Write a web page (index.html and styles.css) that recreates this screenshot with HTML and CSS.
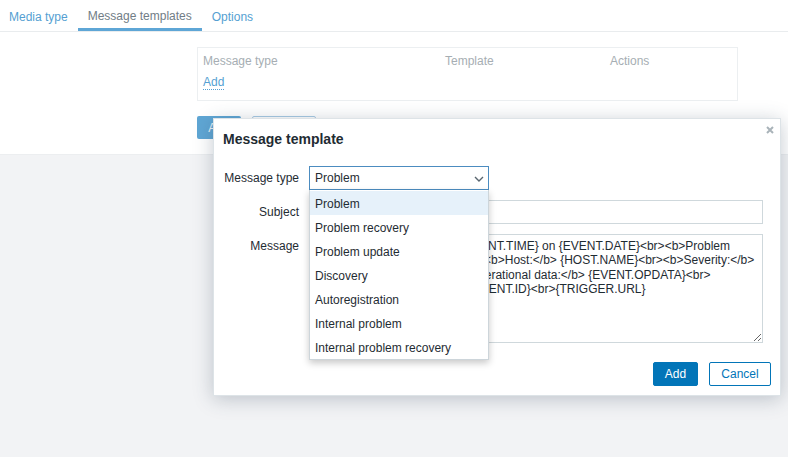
FILE: index.html
```html
<!DOCTYPE html>
<html>
<head>
<meta charset="utf-8">
<link rel="stylesheet" href="styles.css">
</head>
<body>
<div class="top">
  <nav class="tabs">
    <span class="tab first">Media type</span>
    <span class="tab active">Message templates</span>
    <span class="tab">Options</span>
  </nav>
  <div class="content">
    <div class="tbl">
      <div class="tbl-head">
        <span class="c1">Message type</span>
        <span class="c2">Template</span>
        <span class="c3">Actions</span>
      </div>
      <div class="tbl-row"><span class="link">Add</span></div>
    </div>
    <div class="bg-buttons">
      <span class="bg-btn primary">Add</span>
      <span class="bg-btn outline">Cancel</span>
    </div>
  </div>
</div>

<div class="dialog">
  <span class="close"><svg width="8" height="8" viewBox="0 0 8 8"><path d="M1 1L7 7M7 1L1 7" stroke="#a9b3b9" stroke-width="2"/></svg></span>
  <h4 class="title">Message template</h4>
  <div class="form">
    <label class="lbl">Message type</label>
    <div class="field">
      <div class="select">
        <span>Problem</span>
        <svg class="chev" width="10" height="6" viewBox="0 0 10 6"><path d="M1 1L5 5L9 1" fill="none" stroke="#5a6670" stroke-width="1.4"/></svg>
        <ul class="list">
          <li class="hl">Problem</li>
          <li>Problem recovery</li>
          <li>Problem update</li>
          <li>Discovery</li>
          <li>Autoregistration</li>
          <li>Internal problem</li>
          <li>Internal problem recovery</li>
        </ul>
      </div>
    </div>
    <label class="lbl">Subject</label>
    <div class="field"><input class="input" type="text" value="Problem: {EVENT.NAME}"></div>
    <label class="lbl">Message</label>
    <div class="field"><textarea class="area" readonly><b>Problem started</b> at {EVENT.TIME} on {EVENT.DATE}<br><b>Problem name:</b> {EVENT.NAME}<br><b>Host:</b> {HOST.NAME}<br><b>Severity:</b> {EVENT.SEVERITY}<br><b>Operational data:</b> {EVENT.OPDATA}<br> <b>Original problem ID:</b> {EVENT.ID}<br>{TRIGGER.URL}</textarea></div>
  </div>
  <div class="footer">
    <button class="btn primary">Add</button>
    <button class="btn outline">Cancel</button>
  </div>
</div>
</body>
</html>
```
FILE: styles.css
```css
html, body {
  margin: 0;
  padding: 0;
}
body {
  width: 788px;
  height: 457px;
  background: #f2f3f5;
  font-family: "Liberation Sans", Arial, sans-serif;
  font-size: 12px;
  color: #1f2c33;
  position: relative;
  overflow: hidden;
}
.top {
  background: #fff;
  height: 154px;
  border-bottom: 1px solid #eceef0;
}
.tabs {
  display: flex;
  height: 31px;
  border-bottom: 1px solid #e9ecee;
}
.tab {
  display: flex;
  align-items: center;
  padding: 2px 10px 0;
  color: #559fd2;
  box-sizing: border-box;
  height: 31px;
}
.tab.first {
  padding-left: 9px;
}
.tab.active {
  color: #717d86;
  border-bottom: 3px solid #5ea6d6;
  padding-top: 3px;
}
.content {
  padding: 15px 0 0 197px;
}
.tbl {
  width: 541px;
  height: 54px;
  box-sizing: border-box;
  border: 1px solid #eceff1;
  padding: 6px 5px 0;
}
.tbl-head {
  display: flex;
  color: #a6aeb3;
  line-height: 14px;
}
.c1 { width: 242px; }
.c2 { width: 165px; }
.tbl-row {
  margin-top: 7px;
  line-height: 14px;
}
.link {
  color: #559fd2;
  border-bottom: 1px dotted #559fd2;
}
.bg-buttons {
  display: flex;
  gap: 11px;
  margin-top: 15px;
}
.bg-btn {
  height: 23px;
  box-sizing: border-box;
  border-radius: 2px;
  display: flex;
  align-items: center;
  justify-content: center;
}
.bg-btn.primary {
  width: 44px;
  background: #5fa6d4;
  color: #eaf3fa;
}
.bg-btn.outline {
  width: 64px;
  border: 1px solid #a9cbe4;
  color: #a9cbe4;
}

.dialog {
  position: absolute;
  left: 213px;
  top: 118px;
  width: 568px;
  height: 278px;
  box-sizing: border-box;
  background: #fff;
  border: 1px solid #dde3e7;
  box-shadow: 0 3px 18px rgba(50, 70, 90, 0.28);
  padding: 0 0 0 9px;
}
.close {
  position: absolute;
  top: 7px;
  right: 6px;
  display: block;
  line-height: 0;
}
.title {
  margin: 0;
  padding-top: 11px;
  font-size: 14px;
  font-weight: bold;
  line-height: 18px;
  color: #1f2c33;
}
.form {
  margin-top: 18px;
  display: grid;
  grid-template-columns: 76px 454px;
  grid-auto-rows: min-content;
  column-gap: 10px;
  row-gap: 10px;
}
.lbl {
  text-align: right;
  line-height: 23px;
  padding-top: 1px;
  color: #1f2c33;
}
.field {
  position: relative;
}
.select {
  position: relative;
  width: 180px;
  height: 24px;
  box-sizing: border-box;
  border: 1px solid #4c8cc0;
  padding-left: 5px;
  line-height: 22px;
  background: #fff;
}
.chev {
  position: absolute;
  right: 4px;
  top: 9px;
}
.list {
  position: absolute;
  left: -1px;
  top: 23px;
  width: 180px;
  margin: 0;
  padding: 1px 0 0;
  list-style: none;
  background: #fff;
  border: 1px solid #cdd5da;
  border-top: none;
  box-shadow: 0 3px 7px rgba(0, 0, 0, 0.22);
  z-index: 5;
  box-sizing: border-box;
}
.list li {
  height: 24px;
  line-height: 26px;
  padding-left: 5px;
  color: #1f2c33;
}
.list li.hl {
  background: #e6f1fa;
}
.input {
  display: block;
  width: 454px;
  height: 24px;
  box-sizing: border-box;
  border: 1px solid #cfd8dc;
  padding: 0 5px;
  font-family: "Liberation Sans", Arial, sans-serif;
  font-size: 12px;
  color: #1f2c33;
  outline: none;
  margin: 0;
}
.area {
  display: block;
  width: 454px;
  height: 109px;
  box-sizing: border-box;
  border: 1px solid #cfd8dc;
  padding: 4px 4px;
  font-family: "Liberation Sans", Arial, sans-serif;
  font-size: 12px;
  line-height: 14.4px;
  color: #1f2c33;
  resize: both;
  outline: none;
  margin: 0;
  overflow: hidden;
}
.footer {
  display: flex;
  justify-content: flex-end;
  gap: 11px;
  padding: 19px 9px 0 0;
}
.btn {
  height: 24px;
  box-sizing: border-box;
  border-radius: 2px;
  font-family: "Liberation Sans", Arial, sans-serif;
  font-size: 12px;
  padding: 0;
  margin: 0;
  cursor: pointer;
}
.btn.primary {
  width: 45px;
  background: #0275b8;
  border: 1px solid #0275b8;
  color: #fff;
}
.btn.outline {
  width: 62px;
  background: #fff;
  border: 1px solid #0275b8;
  color: #0275b8;
}
```
